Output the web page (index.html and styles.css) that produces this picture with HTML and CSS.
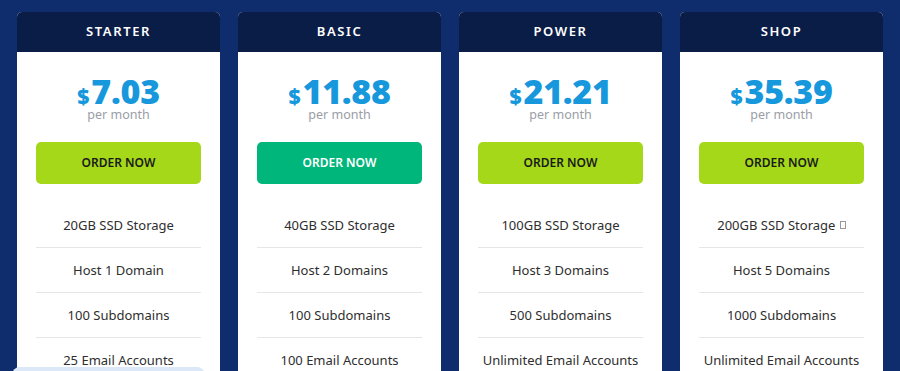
FILE: index.html
```html
<!DOCTYPE html>
<html>
<head>
<meta charset="utf-8">
<link rel="stylesheet" href="styles.css">
</head>
<body>
<div class="plans">
  <div class="card">
    <div class="card-head">STARTER</div>
    <div class="card-body">
      <div class="price"><span class="cur">$</span><span class="amt">7.03</span></div>
      <div class="per">per month</div>
      <a class="btn btn-lime">ORDER NOW</a>
      <ul class="features">
        <li>20GB SSD Storage</li>
        <li>Host 1 Domain</li>
        <li>100 Subdomains</li>
        <li>25 Email Accounts</li>
      </ul>
    </div>
  </div>
  <div class="card">
    <div class="card-head">BASIC</div>
    <div class="card-body">
      <div class="price"><span class="cur">$</span><span class="amt">11.88</span></div>
      <div class="per">per month</div>
      <a class="btn btn-green">ORDER NOW</a>
      <ul class="features">
        <li>40GB SSD Storage</li>
        <li>Host 2 Domains</li>
        <li>100 Subdomains</li>
        <li>100 Email Accounts</li>
      </ul>
    </div>
  </div>
  <div class="card">
    <div class="card-head">POWER</div>
    <div class="card-body">
      <div class="price"><span class="cur">$</span><span class="amt">21.21</span></div>
      <div class="per">per month</div>
      <a class="btn btn-lime">ORDER NOW</a>
      <ul class="features">
        <li>100GB SSD Storage</li>
        <li>Host 3 Domains</li>
        <li>500 Subdomains</li>
        <li>Unlimited Email Accounts</li>
      </ul>
    </div>
  </div>
  <div class="card">
    <div class="card-head">SHOP</div>
    <div class="card-body">
      <div class="price"><span class="cur">$</span><span class="amt">35.39</span></div>
      <div class="per">per month</div>
      <a class="btn btn-lime">ORDER NOW</a>
      <ul class="features">
        <li>200GB SSD Storage <span class="box"></span></li>
        <li>Host 5 Domains</li>
        <li>1000 Subdomains</li>
        <li>Unlimited Email Accounts</li>
      </ul>
    </div>
  </div>
</div>
<div class="notice"></div>
</body>
</html>
```
FILE: styles.css
```css
html, body {
  margin: 0;
  padding: 0;
  height: 100%;
  overflow: hidden;
}
body {
  background: #0f2d6d;
  font-family: "Noto Sans", "Open Sans", sans-serif;
}
.plans {
  display: flex;
  gap: 18px;
  padding: 12px 17px 0;
}
.card {
  width: 203px;
  flex: none;
  border-radius: 5px;
  overflow: hidden;
  background: #fff;
}
.card-head {
  background: #0a1d47;
  color: #fff;
  height: 40px;
  line-height: 38px;
  text-align: center;
  font-size: 13px;
  font-weight: 600;
  letter-spacing: 1.6px;
}
.card-body {
  padding: 0 19px;
  text-align: center;
}
.price {
  display: flex;
  justify-content: center;
  align-items: baseline;
  color: #1798dc;
  font-family: "Open Sans", sans-serif;
  font-weight: 800;
  margin-top: 24px;
  height: 30px;
  line-height: 30px;
}
.cur {
  font-size: 21px;
  margin-right: 2px;
}
.amt {
  font-size: 34px;
  letter-spacing: -0.3px;
}
.per {
  color: #9a9ea6;
  font-size: 12.5px;
  line-height: 14px;
  margin-top: 2px;
}
.btn {
  display: block;
  margin-top: 20px;
  height: 42px;
  line-height: 42px;
  border-radius: 5px;
  font-size: 12px;
  font-weight: 600;
  color: #1a1a1a;
}
.btn-lime {
  background: #a4d819;
}
.btn-green {
  background: #00b67a;
  color: #fff;
}
.features {
  list-style: none;
  margin: 19px 0 0;
  padding: 0;
}
.features li {
  height: 44px;
  line-height: 44px;
  border-bottom: 1px solid #e6e6e6;
  font-size: 13px;
  color: #2e2e2e;
}
.box {
  display: inline-block;
  width: 4px;
  height: 6px;
  border: 1px solid #999;
  vertical-align: 1px;
  margin-left: 1px;
}
.notice {
  position: absolute;
  left: 12px;
  top: 367px;
  width: 193px;
  height: 12px;
  background: #dce7f8;
  border-radius: 8px 8px 0 0;
}
```
